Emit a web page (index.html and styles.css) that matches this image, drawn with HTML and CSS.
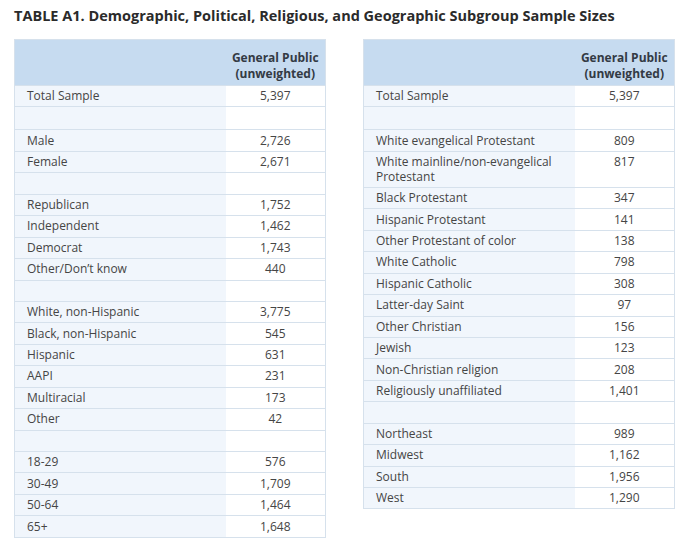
FILE: index.html
```html
<!DOCTYPE html>
<html>
<head>
<meta charset="utf-8">
<link rel="stylesheet" href="styles.css">
</head>
<body>
<h1 class="title">TABLE A1. Demographic, Political, Religious, and Geographic Subgroup Sample Sizes</h1>
<div class="tables">
  <table class="tbl">
    <colgroup><col class="c-lab"><col class="c-val"></colgroup>
    <thead><tr><th class="lab"></th><th class="val">General Public<br>(unweighted)</th></tr></thead>
    <tbody>
      <tr><td class="lab">Total Sample</td><td class="val">5,397</td></tr>
      <tr class="first-gap"><td class="lab"></td><td class="val"></td></tr>
      <tr><td class="lab">Male</td><td class="val">2,726</td></tr>
      <tr><td class="lab">Female</td><td class="val">2,671</td></tr>
      <tr><td class="lab"></td><td class="val"></td></tr>
      <tr><td class="lab">Republican</td><td class="val">1,752</td></tr>
      <tr><td class="lab">Independent</td><td class="val">1,462</td></tr>
      <tr><td class="lab">Democrat</td><td class="val">1,743</td></tr>
      <tr><td class="lab">Other/Don’t know</td><td class="val">440</td></tr>
      <tr><td class="lab"></td><td class="val"></td></tr>
      <tr><td class="lab">White, non-Hispanic</td><td class="val">3,775</td></tr>
      <tr><td class="lab">Black, non-Hispanic</td><td class="val">545</td></tr>
      <tr><td class="lab">Hispanic</td><td class="val">631</td></tr>
      <tr><td class="lab">AAPI</td><td class="val">231</td></tr>
      <tr><td class="lab">Multiracial</td><td class="val">173</td></tr>
      <tr><td class="lab">Other</td><td class="val">42</td></tr>
      <tr><td class="lab"></td><td class="val"></td></tr>
      <tr><td class="lab">18-29</td><td class="val">576</td></tr>
      <tr><td class="lab">30-49</td><td class="val">1,709</td></tr>
      <tr><td class="lab">50-64</td><td class="val">1,464</td></tr>
      <tr><td class="lab">65+</td><td class="val">1,648</td></tr>
    </tbody>
  </table>
  <table class="tbl">
    <colgroup><col class="c-lab"><col class="c-val"></colgroup>
    <thead><tr><th class="lab"></th><th class="val">General Public<br>(unweighted)</th></tr></thead>
    <tbody>
      <tr><td class="lab">Total Sample</td><td class="val">5,397</td></tr>
      <tr class="first-gap"><td class="lab"></td><td class="val"></td></tr>
      <tr><td class="lab">White evangelical Protestant</td><td class="val">809</td></tr>
      <tr class="tall"><td class="lab">White mainline/non-evangelical Protestant</td><td class="val">817</td></tr>
      <tr><td class="lab">Black Protestant</td><td class="val">347</td></tr>
      <tr><td class="lab">Hispanic Protestant</td><td class="val">141</td></tr>
      <tr><td class="lab">Other Protestant of color</td><td class="val">138</td></tr>
      <tr><td class="lab">White Catholic</td><td class="val">798</td></tr>
      <tr><td class="lab">Hispanic Catholic</td><td class="val">308</td></tr>
      <tr><td class="lab">Latter-day Saint</td><td class="val">97</td></tr>
      <tr><td class="lab">Other Christian</td><td class="val">156</td></tr>
      <tr><td class="lab">Jewish</td><td class="val">123</td></tr>
      <tr><td class="lab">Non-Christian religion</td><td class="val">208</td></tr>
      <tr><td class="lab">Religiously unaffiliated</td><td class="val">1,401</td></tr>
      <tr><td class="lab"></td><td class="val"></td></tr>
      <tr><td class="lab">Northeast</td><td class="val">989</td></tr>
      <tr><td class="lab">Midwest</td><td class="val">1,162</td></tr>
      <tr><td class="lab">South</td><td class="val">1,956</td></tr>
      <tr><td class="lab">West</td><td class="val">1,290</td></tr>
    </tbody>
  </table>
</div>
</body>
</html>
```
FILE: styles.css
```css
html, body {
  margin: 0;
  padding: 0;
  background: #ffffff;
}
body {
  font-family: "Open Sans", "Liberation Sans", sans-serif;
  color: #454545;
}
.title {
  margin: 0;
  padding: 6px 0 0 14px;
  font-size: 14.5px;
  line-height: 20px;
  font-weight: 700;
  color: #2b2b2b;
  white-space: nowrap;
}
.tables {
  display: flex;
  gap: 37px;
  padding: 13px 0 0 14px;
  align-items: flex-start;
}
.tbl {
  width: 311px;
  table-layout: fixed;
  border-collapse: collapse;
  border: 1px solid #d6e1ec;
  font-size: 12px;
}
.c-lab {
  width: 211px;
}
.c-val {
  width: 100px;
}
.tbl th {
  background: #c6dbf0;
  height: 42px;
  padding: 0 0 3px 0;
  vertical-align: bottom;
  font-weight: 700;
  color: #333a44;
  line-height: 16px;
  text-align: center;
  white-space: nowrap;
}
.tbl td {
  height: 20.45px;
  padding: 0;
  border-top: 1px solid #d6e1ec;
  line-height: 16px;
  vertical-align: middle;
}
.tbl tr.first-gap td {
  height: 22px;
}
.tbl td.lab {
  background: #f1f6fc;
  padding-left: 12px;
}
.tbl td.val {
  background: #ffffff;
  text-align: center;
}
.tbl tr.tall td {
  vertical-align: top;
  padding-top: 2px;
  padding-bottom: 2px;
  line-height: 15.5px;
}
.tbl tr.tall td.lab {
  padding-right: 12px;
}
```
